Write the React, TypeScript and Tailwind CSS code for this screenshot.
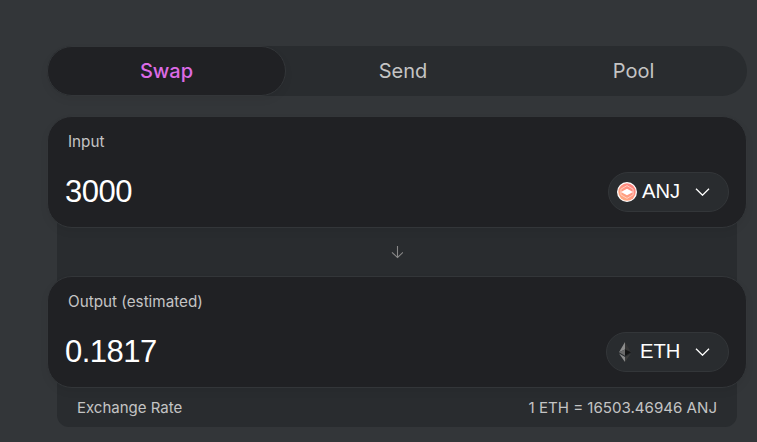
import React from "react";

function Chevron() {
  return (
    <svg width="15" height="8" viewBox="0 0 15 8" fill="none">
      <path d="M1 0.8 L7.5 7.2 L14 0.8" stroke="#fff" strokeWidth="1.3" />
    </svg>
  );
}

function AnjLogo() {
  return (
    <svg width="20" height="20" viewBox="0 0 20 20" fill="none">
      <defs>
        <linearGradient id="anj" x1="16" y1="2" x2="4" y2="18" gradientUnits="userSpaceOnUse">
          <stop stopColor="#ff8080" />
          <stop offset="1" stopColor="#ffad80" />
        </linearGradient>
      </defs>
      <circle cx="10" cy="10" r="10" fill="#fff" />
      <circle cx="10" cy="10" r="8.7" fill="url(#anj)" />
      <path d="M3.9 7.2 L10 3.6 L16.1 7.2 V12.8 L10 16.4 L3.9 12.8 Z" stroke="#ffd5c8" strokeWidth="0.9" />
      <path d="M4 10 L10 6.8 L16 10 L10 13.2 Z" fill="#fff" />
    </svg>
  );
}

function EthLogo() {
  return (
    <svg width="20" height="20" viewBox="0 0 20 20">
      <path d="M10 0 L4 10.2 L10 7.5 Z" fill="#8c8c8c" />
      <path d="M10 0 L16 10.2 L10 7.5 Z" fill="#343434" />
      <path d="M4 10.2 L10 7.5 V13.7 Z" fill="#6a6a6a" />
      <path d="M16 10.2 L10 7.5 V13.7 Z" fill="#141414" />
      <path d="M4 11.4 L10 15 V20 Z" fill="#8c8c8c" />
      <path d="M16 11.4 L10 15 V20 Z" fill="#3c3c3b" />
    </svg>
  );
}

interface PanelProps {
  label: string;
  amount: string;
  token: string;
  logo: React.ReactNode;
  pill: string;
}

function CurrencyPanel({ label, amount, token, logo, pill }: PanelProps) {
  return (
    <section className="relative z-10 h-[112px] rounded-[25px] border border-[#333639] bg-[#202124] shadow-[0_4px_8px_0_rgba(0,0,0,0.05)]">
      <div className="pt-[15px] pl-5 text-[15.25px] leading-5 text-[#c4c4c4]">{label}</div>
      <div className="mt-5 flex h-10 items-center justify-between px-[17px] font-['Liberation_Sans',Arial,sans-serif] text-white">
        <span className="text-[31px] leading-10 tracking-[-0.5px]">{amount}</span>
        <button className={`flex h-10 items-center rounded-full border border-[#333639] bg-[#292c2f] text-[20.2px] ${pill}`}>
          {logo}
          <span className="ml-[5px] flex-1 pb-0.5 text-left leading-6">{token}</span>
          <Chevron />
        </button>
      </div>
    </section>
  );
}

export default function App() {
  return (
    <div className="h-[442px] w-[757px] overflow-hidden bg-[#333639] pt-[46px] pl-[47px] font-[Inter,sans-serif]">
      <main className="w-[700px]">
        <nav className="flex h-[50px] rounded-full bg-[#292c2f] text-xl text-[#c4c4c4]">
          <button className="w-[239px] rounded-full border border-[#333639] bg-[#202124] font-medium text-[#dc6be5] shadow-[0_4px_8px_0_rgba(0,0,0,0.05)]">
            Swap
          </button>
          <button className="w-[234px]">Send</button>
          <button className="w-[227px]">Pool</button>
        </nav>
        <div className="mt-5">
          <CurrencyPanel label="Input" amount="3000" token="ANJ" logo={<AnjLogo />} pill="w-[121px] pl-2 pr-[18px]" />
          <div className="mx-[10px] -my-6 flex h-24 items-center justify-center bg-[#292c2f]">
            <svg width="12" height="13" viewBox="0 0 12 13" fill="none">
              <path d="M6.5 0 V12 M1 6.3 L6.5 11.6 L12 6.3" stroke="#888888" strokeWidth="1.1" />
            </svg>
          </div>
          <CurrencyPanel label="Output (estimated)" amount="0.1817" token="ETH" logo={<EthLogo />} pill="w-[123px] pl-2 pr-[18px]" />
          <div className="mx-[10px] -mt-6 flex h-[63px] items-center justify-between rounded-b-xl bg-[#292c2f] px-5 pt-6 text-[15px] leading-5 text-[#c4c4c4]">
            <span>Exchange Rate</span>
            <span className="text-[15.08px]">1 ETH = 16503.46946 ANJ</span>
          </div>
        </div>
      </main>
    </div>
  );
}
